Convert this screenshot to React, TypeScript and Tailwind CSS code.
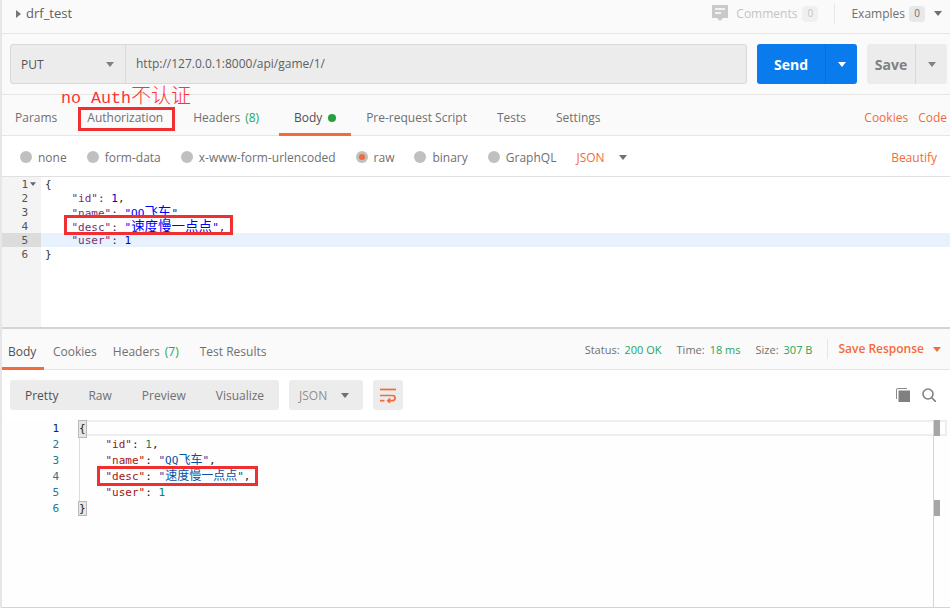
import React from "react";

const sans = { fontFamily: '"Open Sans", "Noto Sans", sans-serif' };

function Caret({ className = "" }: { className?: string }) {
  return (
    <svg width="8" height="5" viewBox="0 0 8 5" className={className}>
      <path d="M0 0h8L4 5z" fill="currentColor" />
    </svg>
  );
}

function Radio({ label, on = false, className = "" }: { label: string; on?: boolean; className?: string }) {
  return (
    <div className={`flex items-center ${className}`}>
      <span className="w-3 h-3 rounded-full bg-[#c0c0c0] flex items-center justify-center mr-1.5">
        {on && <span className="w-1.5 h-1.5 rounded-full bg-[#f26b3a]" />}
      </span>
      <span className="mt-[2px]">{label}</span>
    </div>
  );
}

function Cjk({ children, size }: { children: React.ReactNode; size: string }) {
  return <span className={`${size} inline-block leading-none`} style={{ fontFamily: '"Noto Sans CJK SC", sans-serif' }}>{children}</span>;
}

const mono = "font-['DejaVu_Sans_Mono','Liberation_Mono',monospace]";

function EditorCode() {
  const k = "text-[#7c2d6b]";
  const s = "text-[#0000ff]";
  const n = "text-[#0000cd]";
  const rows: React.ReactNode[] = [
    <>{"{"}</>,
    <>{"    "}<span className={k}>"id"</span>: <span className={n}>1</span>,</>,
    <>{"    "}<span className={k}>"name"</span>: <span className={s}>"QQ<Cjk size="text-[13.5px]">飞车</Cjk>"</span>,</>,
    <>{"    "}<span className={k}>"desc"</span>: <span className={s}>"<Cjk size="text-[13.5px]">速度慢一点点</Cjk>"</span>,</>,
    <>{"    "}<span className={k}>"user"</span>: <span className={n}>1</span></>,
    <>{"}"}</>,
  ];
  return (
    <div className="flex h-[150px] bg-white text-[11px] text-[#333]">
      <div className="w-[39px] shrink-0 bg-[#f4f4f4] text-[#555]">
        {[1, 2, 3, 4, 5, 6].map((i) => (
          <div key={i} className={`h-[14px] leading-[16px] flex items-center ${i === 5 ? "bg-[#dcdcdc]" : ""}`}>
            <span className="w-[26px] text-right pt-[2px]">{i}</span>
            {i === 1 && <Caret className="ml-[2px] w-[6px] h-[4px] text-[#666]" />}
          </div>
        ))}
      </div>
      <div className="flex-1">
        {rows.map((r, i) => (
          <div key={i} className={`h-[14px] leading-[16px] pl-[4px] whitespace-pre ${i === 4 ? "bg-[#e8f2ff]" : ""}`}>{r}</div>
        ))}
      </div>
    </div>
  );
}

function ResponseCode() {
  const k = "text-[#a31515]";
  const s = "text-[#0451a5]";
  const n = "text-[#098658]";
  const rows: React.ReactNode[] = [
    <>{"    "}<span className={k}>"id"</span>: <span className={n}>1</span>,</>,
    <>{"    "}<span className={k}>"name"</span>: <span className={s}>"QQ<Cjk size="text-[12px]">飞车</Cjk>"</span>,</>,
    <>{"    "}<span className={k}>"desc"</span>: <span className={s}>"<Cjk size="text-[12px]">速度慢一点点</Cjk>"</span>,</>,
    <>{"    "}<span className={k}>"user"</span>: <span className={n}>1</span></>,
    <span className="bg-[#e4e8e0] outline outline-1 outline-[#b9b9b9]">{"}"}</span>,
  ];
  return (
    <div className="flex-1 flex bg-[#fefefe] text-[11px] text-[#222]">
      <div className="w-[79px] shrink-0 pr-[20px] pt-[1px] text-right text-[#237893]">
        {[1, 2, 3, 4, 5, 6].map((i) => (
          <div key={i} className={`h-[16px] leading-[16px] ${i === 1 ? "text-[#0b216f]" : ""}`}>{i}</div>
        ))}
      </div>
      <div className="flex-1 border-r border-[#d4d4d4] min-w-0">
        <div className="h-[16px] leading-[16px] border-y-2 border-[#eeeeee] whitespace-pre flex items-center box-border">
          <span className="bg-[#e4e8e0] outline outline-1 outline-[#b9b9b9] mt-[1px]">{"{"}</span>
        </div>
        <div className="border-l border-[#dddddd] h-[80px] pt-[1px]">
          {rows.map((r, i) => (
            <div key={i} className="h-[16px] leading-[16px] whitespace-pre -ml-px">{r}</div>
          ))}
        </div>
      </div>
      <div className="w-[16px] shrink-0">
        <div className="h-[16px] border-y-2 border-r-2 border-[#eeeeee] mr-[3px] relative">
          <div className="w-[6px] h-[16px] -mt-[2px] bg-[#a6a6a6]" />
        </div>
        <div className="w-[6px] h-[16px] bg-[#a6a6a6] mt-[64px]" />
      </div>
    </div>
  );
}

export default function App() {
  return (
    <div className={`relative w-[950px] h-[608px] overflow-hidden bg-white border-l-2 border-[#e6e6e6] text-[12px] text-[#707070] flex flex-col`} style={sans}>
      {/* title bar */}
      <div className="h-[34px] shrink-0 bg-[#fafafa] border-b border-[#e6e6e6] flex items-center pl-[14px] pr-[7px] pb-[6px]">
        <svg width="5" height="8" viewBox="0 0 5 8" className="text-[#777]"><path d="M0 0l5 4-5 4z" fill="currentColor" /></svg>
        <span className="ml-[5px] text-[13px] text-[#606060]">drf_test</span>
        <div className="ml-auto flex items-center">
          <svg width="16" height="17" viewBox="0 0 16 17" className="mr-[8px]">
            <path d="M0 0h16v13h-5l-3 3-3-3H0z" fill="#c9c9c9" />
            <path d="M3 4h10M3 8h6" stroke="#fff" strokeWidth="1.5" />
          </svg>
          <span className="text-[#c4c4c4]">Comments</span>
          <span className="ml-[5px] w-[16px] h-[16px] rounded-sm bg-[#f0f0f0] text-[#c4c4c4] text-[10px] flex items-center justify-center">0</span>
          <span className="ml-[16px] w-px h-[20px] bg-[#e6e6e6]" />
          <span className="ml-[16px] text-[#707070]">Examples</span>
          <span className="ml-[4px] w-[16px] h-[16px] rounded-sm bg-[#e8e8e8] text-[#707070] text-[10px] flex items-center justify-center">0</span>
          <Caret className="ml-[9px] mr-[1px] text-[#707070]" />
        </div>
      </div>

      {/* url bar */}
      <div className="h-[61px] shrink-0 bg-[#fafafa] border-b border-[#e6e6e6] flex items-center pl-[8px] pr-[3px] gap-[10px]">
        <div className="flex-1 h-[40px] bg-[#ececec] border border-[#d8d8d8] rounded-[3px] flex items-center">
          <div className="w-[115px] h-full border-r border-[#d8d8d8] flex items-center justify-between pl-[10px] pr-[11px] text-[#555]">
            <span className="pt-[2px]">PUT</span>
            <Caret className="text-[#808080]" />
          </div>
          <span className="pl-[10px] text-[#606060]">http://127.0.0.1:8000/api/game/1/</span>
        </div>
        <div className="w-[100px] h-[40px] bg-[#097bed] rounded-[3px] flex text-white">
          <div className="w-[69px] border-r border-[#0a6fd4] flex items-center justify-center text-[14px] font-bold">Send</div>
          <div className="flex-1 flex items-center justify-center"><Caret /></div>
        </div>
        <div className="w-[80px] h-[40px] bg-[#ececec] rounded-[3px] flex text-[#808080]">
          <div className="w-[49px] border-r border-[#d8d8d8] flex items-center justify-center text-[14px] font-bold">Save</div>
          <div className="flex-1 flex items-center justify-center"><Caret /></div>
        </div>
      </div>

      {/* request tabs */}
      <div className="h-[41px] shrink-0 bg-[#fafafa] border-b border-[#e6e6e6] flex items-stretch">
        <div className="flex items-center pl-[13px] pr-[15px] pt-[5px]">Params</div>
        <div className="flex items-center px-[15px] pt-[5px]">Authorization</div>
        <div className="flex items-center px-[15px] pt-[5px]">Headers<span className="ml-[5px] text-[#26a65b]">(8)</span></div>
        <div className="flex items-center justify-center w-[72px] ml-[5px] border-b-[3px] border-[#f26b3a] text-[#505050] mb-[-1px] pt-[8px]">
          Body<span className="ml-[6px] w-2 h-2 rounded-full bg-[#26a03e]" />
        </div>
        {["Pre-request Script", "Tests", "Settings"].map((t) => (
          <div key={t} className="flex items-center px-[15px] pt-[5px]">{t}</div>
        ))}
        <div className="ml-auto flex items-center text-[#f26b3a] gap-[10px] pr-[3px] pt-[6px]">
          <span>Cookies</span>
          <span>Code</span>
        </div>
      </div>

      {/* body type */}
      <div className="h-[41px] shrink-0 bg-white border-b border-[#e0e0e0] flex items-center pl-[18px] pr-[13px] pt-[2px]">
        <Radio label="none" />
        <Radio label="form-data" className="ml-[20px]" />
        <Radio label="x-www-form-urlencoded" className="ml-[20px]" />
        <Radio label="raw" on className="ml-[20px]" />
        <Radio label="binary" className="ml-[20px]" />
        <Radio label="GraphQL" className="ml-[20px]" />
        <span className="ml-[20px] mt-[2px] text-[#f26b3a]">JSON</span>
        <Caret className="ml-[14px] text-[#707070]" />
        <span className="ml-auto mt-[2px] text-[#f26b3a]">Beautify</span>
      </div>

      {/* editor */}
      <div className={mono}><EditorCode /></div>

      {/* response tabs */}
      <div className="h-[43px] shrink-0 bg-[#fafafa] border-t-2 border-b border-t-[#d4d4d4] border-b-[#e6e6e6] flex items-stretch -ml-[2px]">
        <div className="flex items-center w-[44px] pl-[8px] border-b-[3px] border-[#f26b3a] text-[#505050] mb-[-1px] pt-[8px]">Body</div>
        <div className="flex items-center ml-[9px] pt-[5px]">Cookies</div>
        <div className="flex items-center ml-[16px] pt-[5px]">Headers<span className="ml-[5px] text-[#26a65b]">(7)</span></div>
        <div className="flex items-center ml-[21px] pt-[5px]">Test Results</div>
        <div className="ml-auto flex items-center text-[11px] pr-[9px]">
          <span className="pt-[2px]">Status:</span><span className="ml-[5px] pt-[2px] text-[#26a65b]">200 OK</span>
          <span className="ml-[15px] pt-[2px]">Time:</span><span className="ml-[5px] pt-[2px] text-[#26a65b]">18 ms</span>
          <span className="ml-[15px] pt-[2px]">Size:</span><span className="ml-[5px] pt-[2px] text-[#26a65b]">307 B</span>
          <span className="ml-[15px] w-px h-[20px] bg-[#e6e6e6]" />
          <span className="ml-[10px] text-[12px] text-[#f26b3a] font-semibold">Save Response</span>
          <Caret className="ml-[9px] text-[#f26b3a]" />
        </div>
      </div>

      {/* response toolbar */}
      <div className="h-[50px] shrink-0 bg-white flex items-center pl-[8px] pr-[14px]">
        <div className="w-[269px] h-[30px] bg-[#ececec] rounded-[3px] flex items-center pl-[15px] pt-[2px]">
          <span className="text-[#505050]">Pretty</span>
          <span className="ml-[30px]">Raw</span>
          <span className="ml-[30px]">Preview</span>
          <span className="ml-[30px]">Visualize</span>
        </div>
        <div className="ml-[10px] w-[74px] h-[30px] bg-[#ececec] rounded-[3px] flex items-center justify-between pl-[10px] pr-[14px] text-[#909090]">
          <span className="pt-[2px]">JSON</span>
          <Caret className="text-[#707070]" />
        </div>
        <div className="ml-[10px] w-[30px] h-[30px] bg-[#ececec] rounded-[3px] flex items-center justify-center">
          <svg width="16" height="15" viewBox="0 0 16 15" fill="none" stroke="#f26b3a" strokeWidth="1.7">
            <path d="M0 1.5h16" />
            <path d="M0 7.5h12.5a2.6 2.6 0 0 1 0 5.2H8" />
            <path d="M10.2 10.4L7.8 12.7l2.4 2.3" />
            <path d="M0 12.7h4.5" />
          </svg>
        </div>
        <div className="ml-auto flex items-center gap-[12px]">
          <svg width="14" height="14" viewBox="0 0 14 14">
            <path d="M2 0h9v1H2a1 1 0 0 0-1 1v9H0V2a2 2 0 0 1 2-2z" fill="#8a8a8a" />
            <rect x="2.5" y="2.5" width="11.5" height="11.5" fill="#808080" />
          </svg>
          <svg width="14" height="14" viewBox="0 0 14 14" fill="none" stroke="#808080" strokeWidth="1.6">
            <circle cx="6" cy="6" r="5" />
            <path d="M9.5 9.5L14 14" />
          </svg>
        </div>
      </div>

      {/* response code */}
      <div className={`flex-1 flex -ml-[2px] border-b border-[#d4d4d4] min-h-0 ${mono}`}><ResponseCode /></div>

      {/* annotations */}
      <div className="absolute left-[59px] top-[84px] whitespace-nowrap text-[#ff3333] leading-[22px]" style={{ fontFamily: '"Liberation Mono", monospace', fontSize: "16.67px" }}>
        no Auth<span className="text-[20px]" style={{ fontFamily: '"Noto Sans CJK SC", sans-serif', fontWeight: 300 }}>不认证</span>
      </div>
      <div className="absolute left-[76px] top-[107px] w-[97px] h-[24px] border-[3px] border-[#f03030]" />
      <div className="absolute left-[62px] top-[215px] w-[169px] h-[20px] border-[3px] border-[#f03030]" />
      <div className="absolute left-[95px] top-[466px] w-[161px] h-[20px] border-[3px] border-[#f03030]" />
    </div>
  );
}
